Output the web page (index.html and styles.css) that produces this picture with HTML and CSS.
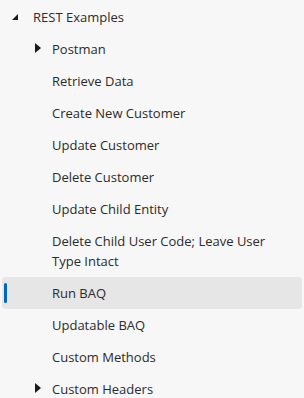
FILE: index.html
```html
<!doctype html>
<html>
<head>
    <title>Tree</title>
    <link rel="stylesheet" href="styles.css">
</head>
<body>
    <ul class="tree">
        <li class="node">
            <div class="row level-0">
                <span class="chevron expanded"></span>
                <span class="label">REST Examples</span>
            </div>
            <ul class="children">
                <li class="row level-1"><span class="chevron collapsed"></span><span class="label">Postman</span></li>
                <li class="row level-1"><span class="label">Retrieve Data</span></li>
                <li class="row level-1"><span class="label">Create New Customer</span></li>
                <li class="row level-1"><span class="label">Update Customer</span></li>
                <li class="row level-1"><span class="label">Delete Customer</span></li>
                <li class="row level-1"><span class="label">Update Child Entity</span></li>
                <li class="row level-1"><span class="label">Delete Child User Code; Leave User Type Intact</span></li>
                <li class="row level-1 selected"><span class="label">Run BAQ</span></li>
                <li class="row level-1"><span class="label">Updatable BAQ</span></li>
                <li class="row level-1"><span class="label">Custom Methods</span></li>
                <li class="row level-1"><span class="chevron collapsed"></span><span class="label">Custom Headers</span></li>
            </ul>
        </li>
    </ul>
</body>
</html>
```

FILE: styles.css
```css
body {
    margin: 0;
    background-color: #f7f7f7;
    color: #2b2b2b;
    font-family: 'Open Sans', 'Noto Sans', sans-serif;
    font-size: 13px;
}
.tree, .children {
    list-style: none;
    margin: 0;
    padding: 0;
}
.tree {
    padding: 1px 2px 0 2px;
}
.row {
    position: relative;
    display: flex;
    align-items: flex-start;
    padding: 6px 8px 6px 0;
    line-height: 20px;
    border-radius: 4px;
}
.level-0 {
    padding-left: 31px;
}
.level-1 {
    padding-left: 50px;
}
.chevron {
    position: absolute;
    width: 0;
    height: 0;
}
.level-0 .chevron {
    left: 10px;
    top: 13px;
}
.chevron.expanded {
    border-left: 6px solid transparent;
    border-bottom: 6px solid #1a1a1a;
}
.level-1 .chevron {
    left: 33px;
    top: 10px;
}
.chevron.collapsed {
    border-top: 5px solid transparent;
    border-bottom: 5px solid transparent;
    border-left: 6px solid #1a1a1a;
}
.selected {
    background-color: #e6e6e6;
}
.selected::before {
    content: '';
    position: absolute;
    left: 2px;
    top: 6px;
    width: 3px;
    height: 20px;
    border-radius: 2px;
    background-color: #0067c0;
}
```
